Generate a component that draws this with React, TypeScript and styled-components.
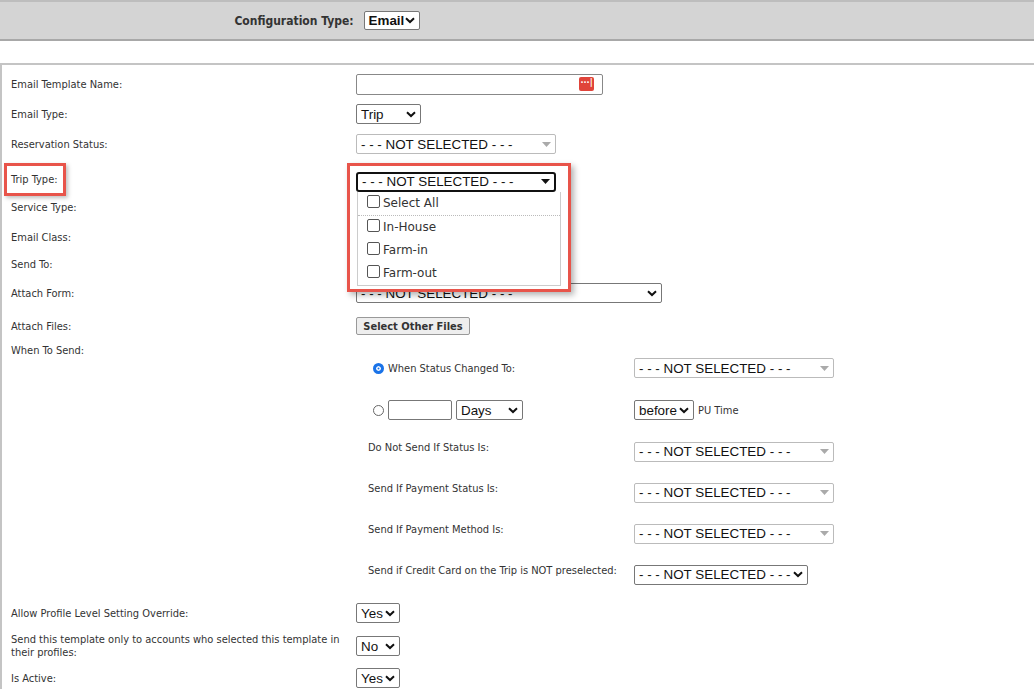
import React from "react";
import styled, { createGlobalStyle } from "styled-components";

const G = createGlobalStyle`
  body { margin: 0; background: #fff; font-family: "DejaVu Sans Condensed", "DejaVu Sans", sans-serif; color: #222; }
`;
const Top = styled.div`
  height: 37px; background: #d4d4d4; border-top: 2px solid #bdbdbd; border-bottom: 2px solid #a8a8a8;
  display: flex; align-items: center; justify-content: center; gap: 10px; padding-right: 380px;
  font-weight: bold; font-size: 12px; color: #333;
`;
const Spacer = styled.div`height: 22px; border-bottom: 2px solid #c4c4c4;`;
const Body = styled.div`border-left: 2px solid #c4c4c4; padding: 0 0 0 9px; font-size: 11px; color: #333;`;
const Row = styled.div<{ h: number }>`
  display: grid; grid-template-columns: 345px 1fr; height: ${p => p.h}px; align-items: center; position: relative;
`;
const Label = styled.div`line-height: 13px;`;
const BoxedLabel = styled.div`
  line-height: 13px; width: 52px; height: 27px; margin-left: -7px; box-sizing: content-box;
  border: 3px solid #e8544a; padding-left: 4px; display: flex; align-items: center;
  box-shadow: 2px 2px 4px rgba(0,0,0,0.25);
`;
const Sel = styled.div<{ w: number; dim?: boolean; focus?: boolean; h?: number }>`
  width: ${p => p.w}px; height: ${p => p.h || 20}px; box-sizing: border-box; display: flex; align-items: center;
  justify-content: space-between; padding: 0 4px 0 4px; font-family: "Liberation Sans", Arial, sans-serif; font-size: 13.4px; color: #111;
  white-space: nowrap; overflow: hidden;
  background: #fff; border: ${p => (p.focus ? "2px solid #111" : p.dim ? "1px solid #bbb" : "1px solid #777")};
  border-radius: ${p => (p.focus ? 3 : 2)}px;
`;
const Chev = () => (
  <svg width="10" height="7" viewBox="0 0 10 7" style={{ flex: "none" }}><path d="M1 1.2 L5 5 L9 1.2" stroke="#111" strokeWidth="2" fill="none" /></svg>
);
const Tri = ({ c }: { c: string }) => (
  <svg width="9" height="5" viewBox="0 0 9 5" style={{ flex: "none" }}><path d="M0 0 H9 L4.5 5Z" fill={c} /></svg>
);
const Input = styled.div<{ w: number }>`
  width: ${p => p.w}px; height: 21px; box-sizing: border-box; border: 1px solid #888; border-radius: 2px;
  display: flex; align-items: center; justify-content: flex-end; padding-right: 8px;
`;
const Dots = styled.div`
  width: 15px; height: 14px; background: #e0443a; border-radius: 2px; color: #fff; font-size: 9px; line-height: 10px;
  display: flex; justify-content: center; font-weight: bold;
`;
const Btn = styled.div`
  width: 114px; height: 18px; box-sizing: border-box; border: 1px solid #999; border-radius: 2px; background: #eee;
  font-weight: bold; font-size: 11px; display: flex; align-items: center; justify-content: center;
`;
const Menu = styled.div`
  position: absolute; left: -9px; top: -17px; width: 206px; padding: 6px 6px 3px;
  border: 3px solid #e8544a; box-shadow: 3px 3px 6px rgba(0,0,0,0.3); background: #fff; z-index: 2;
`;
const List = styled.div`border: 1px solid #ccc; border-top: none; margin: 0 1px; font-family: "DejaVu Sans", Verdana, sans-serif; font-size: 12px; color: #333;`;
const Opt = styled.div<{ sep?: boolean }>`
  height: 23px; display: flex; align-items: center; gap: 3px; padding-left: 9px;
  ${p => p.sep && "border-bottom: 1px dotted #bbb;"}
`;
const Box = styled.span`width: 11px; height: 11px; border: 1px solid #555; border-radius: 2px; display: inline-block; margin-top: -4px;`;
const Sub = styled.div`padding: 0 0 0 354px;`;
const SubRow = styled.div<{ h: number; pt?: number }>`
  display: grid; grid-template-columns: 269px 1fr; height: ${p => p.h}px; align-items: center;
  box-sizing: border-box; padding-top: ${p => p.pt || 0}px;
`;
const Radio = styled.span<{ on?: boolean }>`
  width: 11px; height: 11px; border-radius: 50%; display: inline-block; box-sizing: border-box;
  border: ${p => (p.on ? "3px solid #1a73e8" : "1px solid #666")}; ${p => p.on && "box-shadow: inset 0 0 0 1.5px #fff; background:#1a73e8;"}
`;
const Inline = styled.div<{ pl?: number }>`display: flex; align-items: center; gap: 4px; padding-left: ${p => p.pl ?? 8}px;`;
const SubLabel = styled.div`padding-left: 3px; margin-top: -8px;`;
const Small = styled.div`width: 64px; height: 20px; border: 1px solid #777; border-radius: 2px; box-sizing: border-box;`;

const NS = "- - - NOT SELECTED - - -";
const Dim = ({ w }: { w: number }) => <Sel w={w} dim><span>{NS}</span><Tri c="#aaa" /></Sel>;

export default function App() {
  return (
    <>
      <G />
      <Top>
        <span>Configuration Type:</span>
        <Sel w={56} h={19}><span>Email</span><Chev /></Sel>
      </Top>
      <Spacer />
      <Body>
        <Row h={38}><Label>Email Template Name:</Label><Input w={247}><Dots>···|</Dots></Input></Row>
        <Row h={22}><Label>Email Type:</Label><Sel w={65}><span>Trip</span><Chev /></Sel></Row>
        <Row h={38}><Label>Reservation Status:</Label><Dim w={200} /></Row>
        <Row h={28}>
          <BoxedLabel>Trip Type:</BoxedLabel>
          <div style={{ position: "relative" }}>
            <Menu>
              <Sel w={200} focus><span>{NS}</span><Tri c="#111" /></Sel>
              <List>
                <Opt sep><Box />Select All</Opt>
                <Opt><Box />In-House</Opt>
                <Opt><Box />Farm-in</Opt>
                <Opt><Box />Farm-out</Opt>
              </List>
            </Menu>
          </div>
        </Row>
        <Row h={32}><Label>Service Type:</Label></Row>
        <Row h={28}><Label>Email Class:</Label></Row>
        <Row h={26}><Label>Send To:</Label></Row>
        <Row h={32}><Label>Attach Form:</Label><Sel w={306}><span>{NS}</span><Chev /></Sel></Row>
        <Row h={34}><Label>Attach Files:</Label><Btn>Select Other Files</Btn></Row>
        <Row h={14}><Label>When To Send:</Label></Row>
        <Sub>
          <SubRow h={22}><Inline><Radio on /> When Status Changed To:</Inline><Dim w={200} /></SubRow>
          <SubRow h={52} pt={10}><Inline><Radio /><Small /><Sel w={67}><span>Days</span><Chev /></Sel></Inline>
            <Inline pl={0}><Sel w={60}><span>before</span><Chev /></Sel> PU Time</Inline></SubRow>
          <SubRow h={41}><SubLabel>Do Not Send If Status Is:</SubLabel><Dim w={200} /></SubRow>
          <SubRow h={41}><SubLabel>Send If Payment Status Is:</SubLabel><Dim w={200} /></SubRow>
          <SubRow h={41}><SubLabel>Send If Payment Method Is:</SubLabel><Dim w={200} /></SubRow>
          <SubRow h={41}><SubLabel>Send if Credit Card on the Trip is NOT preselected:</SubLabel><Sel w={174}><span>{NS}</span><Chev /></Sel></SubRow>
        </Sub>
        <Row h={36}><Label>Allow Profile Level Setting Override:</Label><Sel w={44}><span>Yes</span><Chev /></Sel></Row>
        <Row h={30}><Label>Send this template only to accounts who selected this template in their profiles:</Label><Sel w={44}><span>No</span><Chev /></Sel></Row>
        <Row h={34}><Label>Is Active:</Label><Sel w={44}><span>Yes</span><Chev /></Sel></Row>
      </Body>
    </>
  );
}
